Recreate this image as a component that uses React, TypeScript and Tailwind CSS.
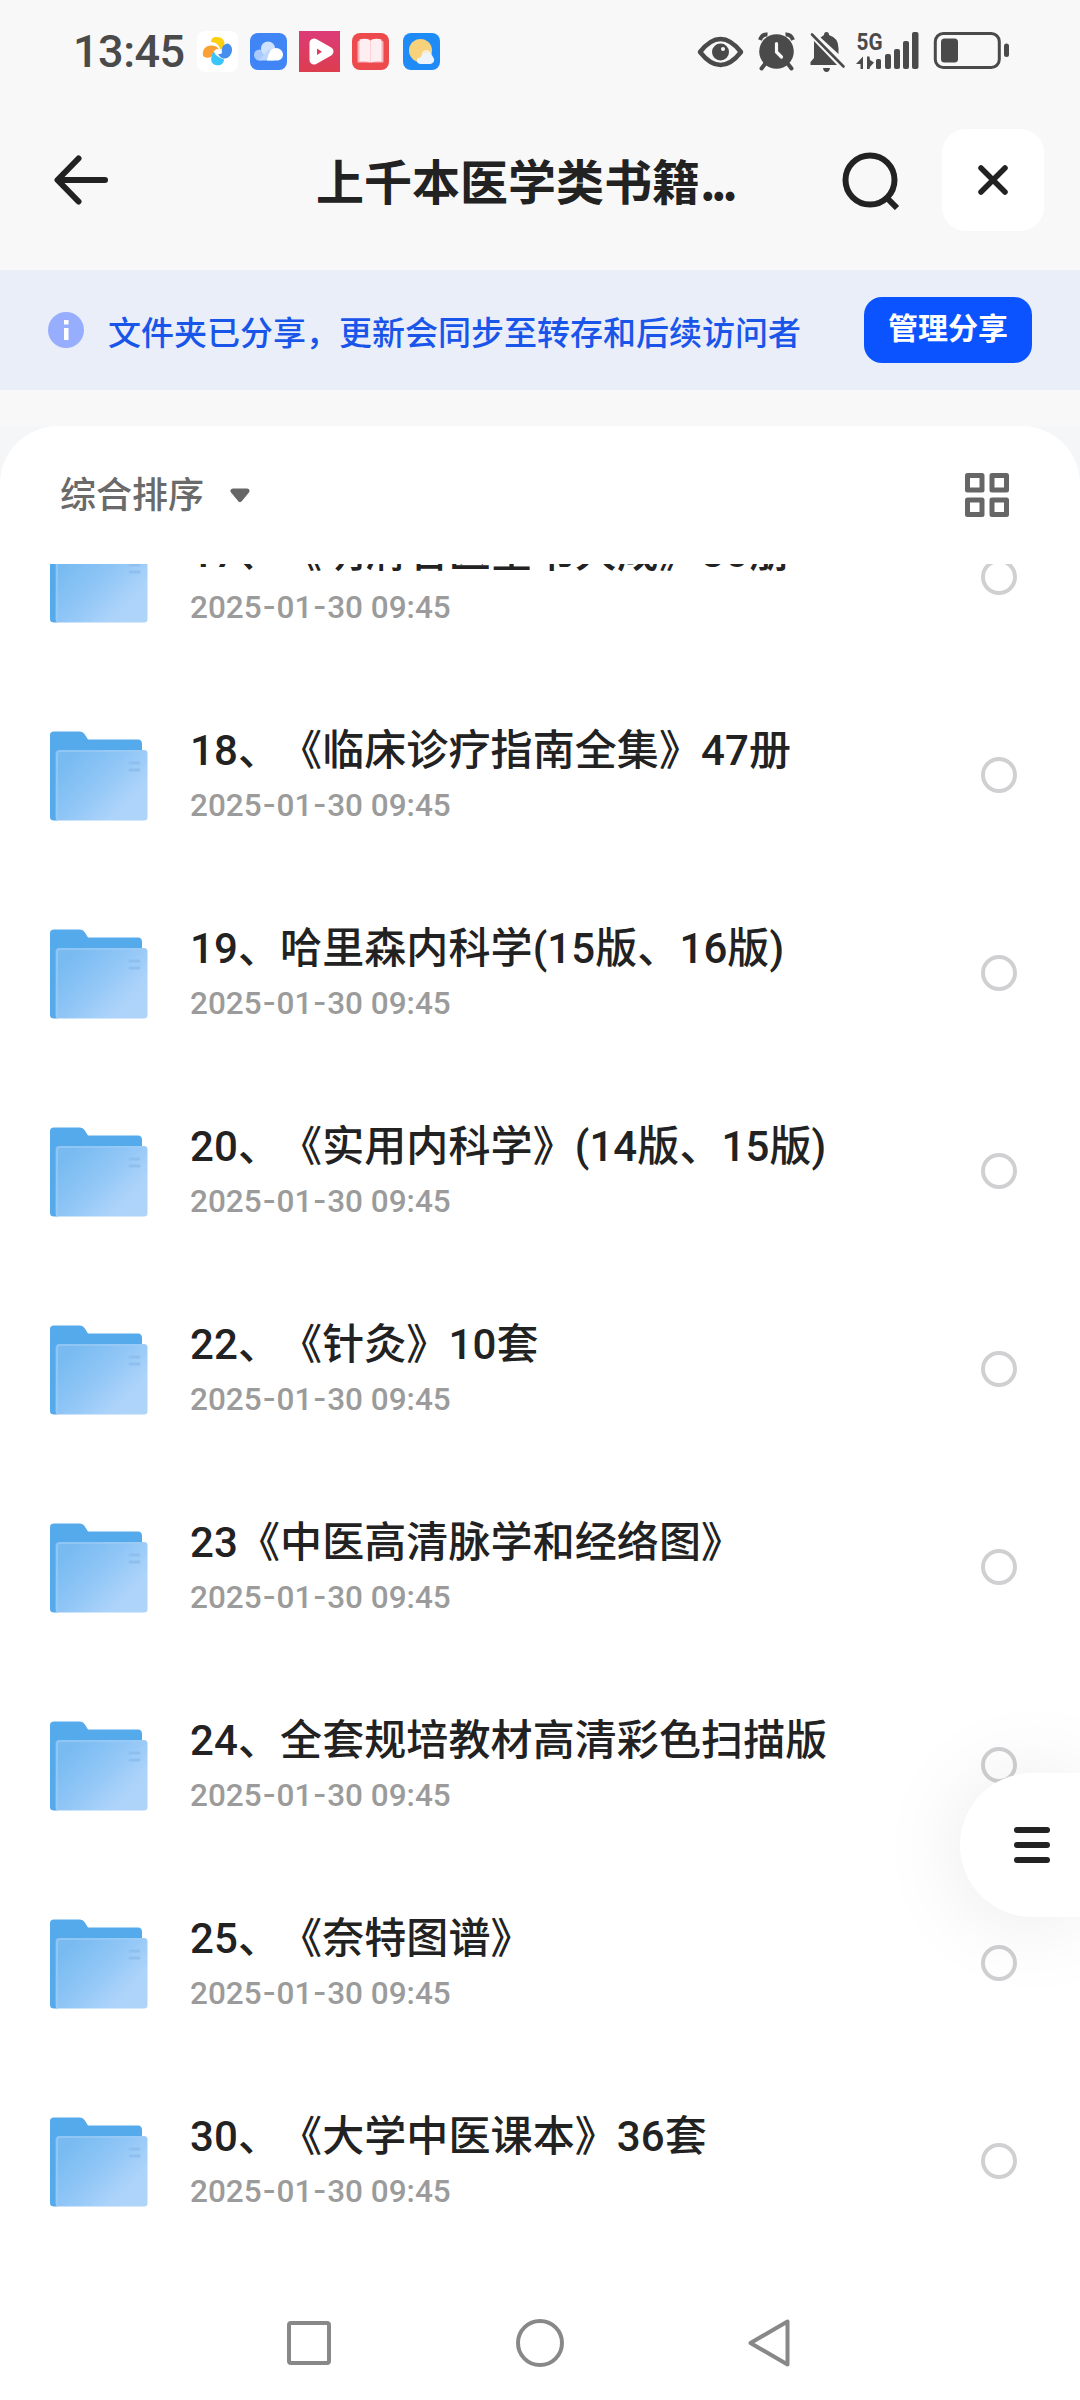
import type { ReactNode } from "react";

const folders = [
  "17、《明清名医全书大成》30册",
  "18、《临床诊疗指南全集》47册",
  "19、哈里森内科学(15版、16版)",
  "20、《实用内科学》(14版、15版)",
  "22、《针灸》10套",
  "23《中医高清脉学和经络图》",
  "24、全套规培教材高清彩色扫描版",
  "25、《奈特图谱》",
  "30、《大学中医课本》36套",
];

function AppIcons() {
  return (
    <div className="flex items-center ml-[14px]">
      {/* Pinwheel */}
      <svg width="41" height="41" viewBox="0 0 41 41">
        <rect width="41" height="41" rx="8" fill="#fff" />
        <path d="M14 11C14 7 17 5.500 20 6C25 6 27.500 9 27.500 13C27.500 16 26 18 23.500 18.500C22 14 19 11 14 11Z" fill="#fdd00f" />
        <path d="M6 25C5 18 9 14.500 14 14.500C18 14.500 21 16 22 18.500C18 18 16 20 15.500 24C15 27 9 28 6 25Z" fill="#fba032" />
        <path d="M25 22C24 16 27 12.500 31 12.500C35 14 36 19 34 23C32 27 28 28.500 25 27C23 26 22 24.500 21 23C23 23.300 24.300 23 25 22Z" fill="#468df0" />
        <path d="M17 20.500C18 24 21 26 27 28.500C27 33 23 35 19 34C15 33.500 13.500 29.500 14.500 26C15 23 16 21 17 20.500Z" fill="#3bc4fa" />
        <circle cx="20.500" cy="20.500" r="2.600" fill="#fff" />
      </svg>
      {/* Cloud */}
      <svg className="ml-[12px]" width="37" height="37" viewBox="0 0 37 37">
        <rect width="37" height="37" rx="8" fill="#3f85f5" />
        <circle cx="9.500" cy="22" r="5.500" fill="#a9cbfb" />
        <circle cx="18" cy="15.500" r="7" fill="#cfe2fd" />
        <path d="M9 27.500L19 16L24 27.500Z" fill="#bcd6fc" />
        <path d="M17 27.500C18 24 19 15 26 15C30 15 33 18 33 21.500C33 25 30.500 27.500 27 27.500Z" fill="#fff" />
      </svg>
      {/* Video */}
      <svg className="ml-[12px]" width="41" height="41" viewBox="0 0 41 41">
        <defs>
          <linearGradient id="video" x1="0" y1="0" x2="0" y2="1">
            <stop offset="0" stopColor="#dc3b78" />
            <stop offset="1" stopColor="#dc3d4e" />
          </linearGradient>
        </defs>
        <rect width="41" height="41" fill="url(#video)" />
        <path d="M15 12V29L30 20.500Z" fill="none" stroke="#fff" strokeWidth="9" strokeLinejoin="round" />
        <path d="M18 17.500V24L23 20.700Z" fill="#dc3c62" />
      </svg>
      {/* Books */}
      <svg className="ml-[12px]" width="37" height="37" viewBox="0 0 37 37">
        <rect width="37" height="37" rx="8" fill="#ed4a4e" />
        <rect x="5.500" y="8" width="26" height="21.500" rx="1" fill="#f9b4bc" />
        <path d="M7.500 6.500Q13 4.800 18.300 7V29.500Q13 27.500 7.500 28.500Z" fill="#fdeef2" />
        <path d="M29.500 6.500Q24 4.800 18.700 7V29.500Q24 27.500 29.500 28.500Z" fill="#fdeef2" />
      </svg>
      {/* Weather */}
      <svg className="ml-[14px]" width="37" height="37" viewBox="0 0 37 37">
        <rect width="37" height="37" rx="8" fill="#1e8bf7" />
        <circle cx="17.500" cy="17.500" r="11.500" fill="#f8d27b" />
        <circle cx="23.500" cy="22" r="5" fill="#f6ecd3" />
        <path d="M18 31C12.500 31 12.500 24.500 17.500 24.500C19 19 28 18 30 24C32.500 27 30.500 31 27 31Z" fill="#eef4fb" />
      </svg>
    </div>
  );
}

function StatusIcons() {
  return (
    <svg className="ml-auto overflow-visible" width="312" height="42" viewBox="698 31 312 42" fill="#4a4a4a">
      {/* Eye */}
      <path d="M700 52Q720.500 26 741 52Q720.500 78 700 52Z" fill="none" stroke="#4a4a4a" strokeWidth="4.500" strokeLinejoin="round" />
      <circle cx="720.500" cy="52" r="8.500" />
      <circle cx="723" cy="49" r="2" fill="#f8f8f8" />
      {/* Alarm */}
      <circle cx="776.500" cy="51.500" r="17.300" />
      <path d="M760 40Q762 34 767.500 34.500M793 40Q791 34 785.500 34.500" fill="none" stroke="#4a4a4a" strokeWidth="4" />
      <path d="M765 64L761.500 68.500M788 64L791.500 68.500" stroke="#4a4a4a" strokeWidth="4" strokeLinecap="round" />
      <path d="M776.500 43.500V52L781.500 57" fill="none" stroke="#f8f8f8" strokeWidth="3.200" strokeLinecap="round" />
      {/* Muted bell */}
      <path d="M824 35Q824 32 826.500 32Q829 32 829 35Q838.500 38 838.500 48V54L820.500 37.500Z" />
      <path d="M814 41L837 65H810.500V62L814 58Z" />
      <path d="M823 68H830Q829.500 72 826.500 72Q823.500 72 823 68Z" />
      <path d="M812 34.500L843.500 66.500" stroke="#4a4a4a" strokeWidth="2.600" strokeLinecap="round" />
      {/* Network */}
      <text x="856.500" y="50" fontSize="24.500" fontWeight="700" textLength="26" lengthAdjust="spacingAndGlyphs" className="font-['Roboto',sans-serif]">5G</text>
      <path d="M863 56.500V69H860.500V64H856Z M867 56.500V69H869.500L870 67L874 62.500L870 60L869.500 56.500Z" />
      <rect x="876" y="59" width="5" height="10" rx="1.500" />
      <rect x="885" y="54" width="6" height="15" rx="2" />
      <rect x="894" y="49" width="6" height="20" rx="2" />
      <rect x="903" y="41" width="6" height="28" rx="2" />
      <rect x="912" y="32" width="6.500" height="37" rx="2" />
      {/* Battery */}
      <rect x="935.300" y="33.500" width="64" height="34" rx="8" fill="none" stroke="#4a4a4a" strokeWidth="3" />
      <rect x="941" y="38.500" width="17" height="24" rx="3.500" />
      <rect x="1004" y="43.500" width="5" height="13.500" rx="2.500" />
    </svg>
  );
}

function FolderIcon() {
  return (
    <svg className="shrink-0 mt-0.5" width="98" height="90" viewBox="0 0 98 90">
      <defs>
        <linearGradient id="folder" x1="0.100" y1="0.200" x2="0.900" y2="0.800">
          <stop offset="0" stopColor="#79bbf1" />
          <stop offset="0.450" stopColor="#90c6f6" />
          <stop offset="0.850" stopColor="#acd3fa" />
          <stop offset="1" stopColor="#aed4fa" />
        </linearGradient>
      </defs>
      <path d="M0 4Q0 0.500 4 0.500H30Q33 0.500 34.500 3L38 8.500H88Q92 8.500 92 13V60H8V89.500H4Q0 89.500 0 86Z" fill="#55aaec" />
      <rect x="5.500" y="19" width="92" height="70.500" rx="3.500" fill="url(#folder)" />
      <path d="M7 89V23Q7 20 10 20H95" fill="none" stroke="#9fcdf6" strokeWidth="2" opacity="0.600" />
      <path d="M80 32H89M80 39H89" stroke="#8fbfee" strokeWidth="3" strokeLinecap="round" />
    </svg>
  );
}

function Dash() {
  return <span className="px-px text-[36px] leading-none font-['Noto_Sans_CJK_SC',sans-serif]">-</span>;
}

function FolderRow({ name }: { name: string }) {
  return (
    <li className="h-[198px] shrink-0 flex items-center pl-[50px] pr-[63px]">
      <FolderIcon />
      <div className="ml-[42px] mb-[3px] flex flex-col gap-1.5 font-['Roboto','Noto_Sans_CJK_SC',sans-serif]">
        <span className="h-[50px] leading-[50px] text-[42px] tracking-[0.1px] font-medium text-[#222]">{name}</span>
        <span className="h-10 leading-10 text-[31.5px] font-medium text-[#9b9b9b]">
          2025<Dash />01<Dash />30 09:45
        </span>
      </div>
      <span className="ml-auto w-9 h-9 rounded-full border-4 border-[#d0d0d3]" />
    </li>
  );
}

function Banner({ children }: { children: ReactNode }) {
  return (
    <div className="h-[120px] shrink-0 bg-[#e9eef9] flex items-center pl-12 pr-12">
      <svg width="36" height="36" viewBox="0 0 36 36">
        <circle cx="18" cy="18" r="18" fill="#97aeff" />
        <rect x="16" y="8" width="4.500" height="4.500" fill="#fff" />
        <rect x="16" y="16" width="4.500" height="12" fill="#fff" />
      </svg>
      <span className="ml-6 pt-0.5 text-[33px] leading-[48px] font-medium text-[#1a55ea]">{children}</span>
      <button className="ml-auto w-[168px] h-[66px] pb-2 rounded-[18px] bg-[#0b53ff] text-white text-[30px] font-bold">
        管理分享
      </button>
    </div>
  );
}

export default function App() {
  return (
    <div className="relative w-[1080px] h-[2400px] overflow-hidden flex flex-col bg-[#f8f8f8] whitespace-nowrap font-['Noto_Sans_CJK_SC',sans-serif] [text-spacing-trim:space-all]">
      {/* Status bar */}
      <div className="h-[103px] shrink-0 flex items-center pl-[73px] pr-[70px] text-[#4a4a4a]">
        <span className="w-[110px] text-[45px] leading-[60px] font-medium tracking-[-0.5px] font-['Roboto',sans-serif]">13:45</span>
        <AppIcons />
        <StatusIcons />
      </div>

      {/* Header */}
      <header className="h-[167px] shrink-0 flex items-center pl-[54px] pr-9 pb-[13px]">
        <svg width="54" height="50" viewBox="0 0 54 50" fill="none" stroke="#222" strokeWidth="6" strokeLinecap="round" strokeLinejoin="round">
          <path d="M51 25H4M24.500 3.500L3.500 25L24.500 46.500" />
        </svg>
        <h1 className="ml-[208px] w-[420px] pb-[3px] text-[48px] leading-[70px] font-bold text-[#222]">
          上千本医学类书籍<span className="tracking-[-4.500px]">...</span>
        </h1>
        <svg className="ml-[105px]" width="60" height="60" viewBox="0 0 60 60" fill="none" stroke="#222" strokeWidth="6">
          <circle cx="29" cy="30" r="24.500" />
          <path d="M45 47L56 58" />
        </svg>
        <button className="ml-auto w-[102px] h-[102px] rounded-3xl bg-white flex items-center justify-center">
          <svg width="30" height="30" viewBox="0 0 30 30" stroke="#222" strokeWidth="5.500" strokeLinecap="round">
            <path d="M3 3L27 27M27 3L3 27" />
          </svg>
        </button>
      </header>

      <Banner>文件夹已分享，更新会同步至转存和后续访问者</Banner>

      <div className="mt-9 flex-1 min-h-0 flex flex-col bg-[#f5f6f8]">
        <main className="flex-1 min-h-0 flex flex-col rounded-t-[58px] bg-white">
          {/* Sort bar */}
          <div className="h-[138px] shrink-0 flex items-center pl-[60px] pr-[71px]">
            <span className="pb-1.5 text-[36px] leading-[50px] font-medium text-[#6a6a6a]">综合排序</span>
            <svg className="ml-[26px]" width="20" height="15" viewBox="0 0 20 15">
              <path d="M3 3H17L10 11.500Z" fill="#666" stroke="#666" strokeWidth="5" strokeLinejoin="round" />
            </svg>
            <svg className="ml-auto" width="44" height="44" viewBox="0 0 44 44" fill="none" stroke="#666" strokeWidth="5" strokeLinejoin="round">
              <rect x="2.500" y="2.500" width="14.500" height="14.500" />
              <rect x="27" y="2.500" width="14.500" height="14.500" />
              <rect x="2.500" y="27" width="14.500" height="14.500" />
              <rect x="27" y="27" width="14.500" height="14.500" />
            </svg>
          </div>

          {/* Scrolled file list */}
          <ul className="h-[1696px] shrink-0 overflow-hidden flex flex-col justify-end">
            {folders.map((name) => (
              <FolderRow key={name} name={name} />
            ))}
          </ul>

          {/* System navigation */}
          <nav className="mt-[26px] h-[114px] flex items-center pl-[287px] pr-[290px] justify-between">
            <svg width="44" height="44" viewBox="0 0 44 44">
              <rect x="2" y="2" width="40" height="40" rx="2" fill="none" stroke="#888" strokeWidth="4" />
            </svg>
            <svg width="48" height="48" viewBox="0 0 48 48">
              <circle cx="24" cy="24" r="22" fill="none" stroke="#888" strokeWidth="4" />
            </svg>
            <svg width="42" height="48" viewBox="0 0 42 48">
              <path d="M39.500 2.500V45.500L2.500 24Z" fill="none" stroke="#888" strokeWidth="4" strokeLinejoin="round" />
            </svg>
          </nav>
        </main>
      </div>

      {/* Floating menu tab on the right edge */}
      <button className="absolute right-0 top-[1773px] w-[120px] h-36 rounded-l-full bg-white shadow-[0_4px_90px_rgba(0,0,0,0.09)] flex items-center pl-[54px]">
        <span className="flex flex-col gap-[9px]">
          <span className="w-9 h-1.5 rounded-full bg-[#222]" />
          <span className="w-9 h-1.5 rounded-full bg-[#222]" />
          <span className="w-9 h-1.5 rounded-full bg-[#222]" />
        </span>
      </button>
    </div>
  );
}
